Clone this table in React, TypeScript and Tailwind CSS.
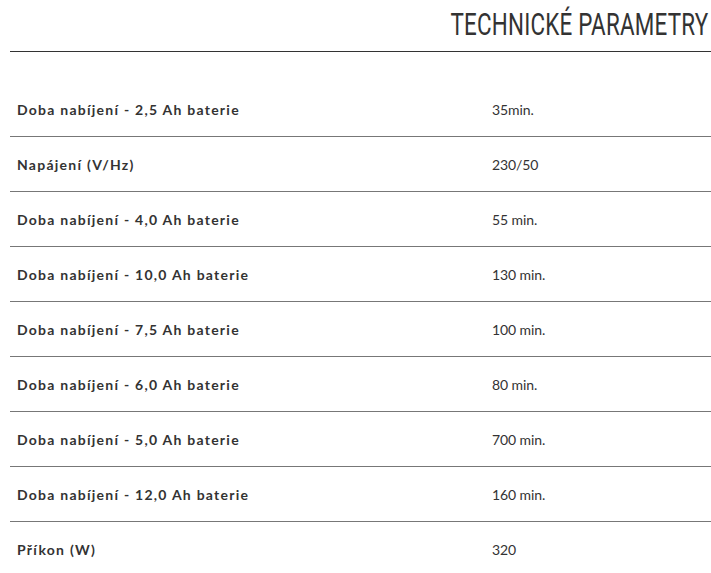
import React from 'react';

const params: [string, string][] = [
  ['Doba nabíjení - 2,5 Ah baterie', '35min.'],
  ['Napájení (V/Hz)', '230/50'],
  ['Doba nabíjení - 4,0 Ah baterie', '55 min.'],
  ['Doba nabíjení - 10,0 Ah baterie', '130 min.'],
  ['Doba nabíjení - 7,5 Ah baterie', '100 min.'],
  ['Doba nabíjení - 6,0 Ah baterie', '80 min.'],
  ['Doba nabíjení - 5,0 Ah baterie', '700 min.'],
  ['Doba nabíjení - 12,0 Ah baterie', '160 min.'],
  ['Příkon (W)', '320'],
];

const App: React.FC = () => {
  return (
    <div className="w-[711px] h-[573px] overflow-hidden bg-white pl-[10px] font-['Lato',sans-serif] text-[#333]">
      {/* heading */}
      <div className="h-[52px] border-b border-[#333] flex items-start justify-end pt-[5px] pr-[3px]">
        <h2 className="origin-right scale-x-[0.70] font-['Roboto',sans-serif] text-[32px] leading-[38px] font-normal tracking-[0.3px] text-[#333] whitespace-nowrap">
          TECHNICKÉ PARAMETRY
        </h2>
      </div>

      <table className="mt-[29px] w-[701px] border-collapse">
        <tbody>
          {params.map(([label, value], i) => (
            <tr key={i} className={i < params.length - 1 ? 'border-b border-[#777]' : ''}>
              <td className="h-[55px] w-[475px] pl-[7px] pt-[2px] text-[14px] font-bold tracking-[1.25px] align-middle">
                {label}
              </td>
              <td className="h-[55px] pl-[7px] pt-[2px] text-[14px] tracking-[-0.1px] align-middle">{value}</td>
            </tr>
          ))}
        </tbody>
      </table>
    </div>
  );
};

export default App;
